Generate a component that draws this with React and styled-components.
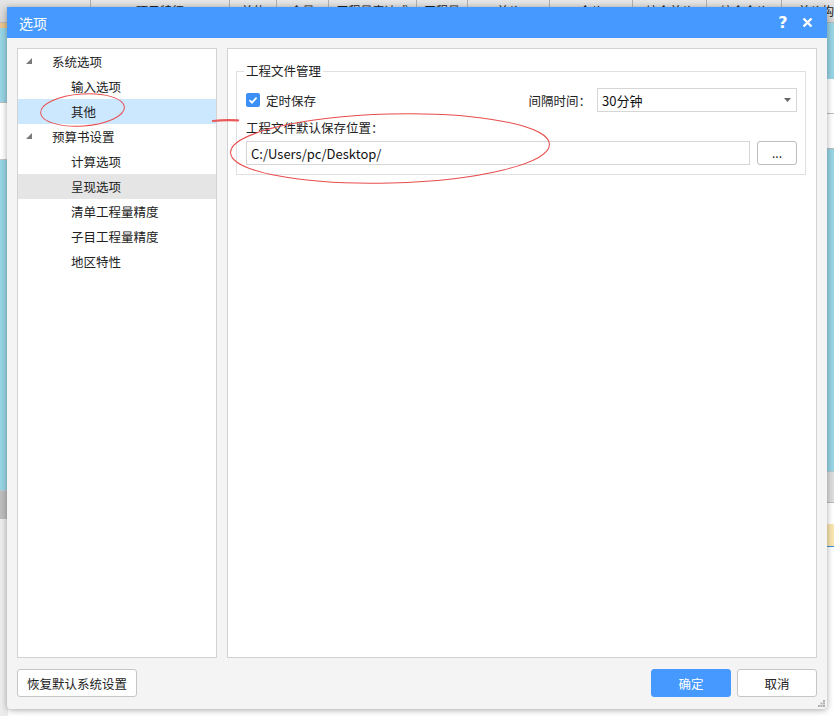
import styled, { createGlobalStyle } from "styled-components"

const GlobalStyle = createGlobalStyle`
    html, body {
        margin: 0;
        padding: 0;
        overflow: hidden;
    }
    body {
        font-family: "Noto Sans CJK SC", "Noto Sans", sans-serif;
        font-size: 12px;
        color: #333;
    }
`

const Screen = styled.div`
    position: relative;
    width: 834px;
    height: 716px;
    overflow: hidden;
    background: #fff;
`

/* ---- the app that sits behind the dialog ---- */

const BgApp = styled.div`
    display: flex;
    flex-direction: column;
    width: 100%;
    height: 100%;
`

const HeaderRow = styled.div`
    display: flex;
    height: 22px;
    background: linear-gradient(#e6e6e6, #d4d4d4);
    border-bottom: 1px solid #b8b8b8;
`

const HeaderCell = styled.div`
    width: ${p => p.w}px;
    flex-shrink: 0;
    border-right: 1px solid #b0b0b0;
    text-align: center;
    line-height: 22px;
    font-size: 12px;
    color: #222;
    white-space: nowrap;
    overflow: hidden;
`

const BgBody = styled.div`
    flex: 1;
    display: flex;
`

const Strip = styled.div`
    width: 8px;
    display: flex;
    flex-direction: column;
`

const Band = styled.div`
    height: ${p => p.h}px;
    flex: ${p => (p.fill ? 1 : "none")};
    background: ${p => p.bg};
    border-bottom: 1px solid ${p => p.line || "transparent"};
    font-size: 12px;
    line-height: ${p => p.h}px;
    color: #222;
    overflow: hidden;
    white-space: nowrap;
`

const BgMiddle = styled.div`
    flex: 1;
    background: #fff;
`

/* ---- dialog ---- */

const Dialog = styled.div`
    position: absolute;
    left: 7px;
    top: 7px;
    width: 820px;
    height: 702px;
    display: flex;
    flex-direction: column;
    background: #f4f4f4;
    border-radius: 0 0 4px 4px;
    box-shadow: 0 1px 6px rgba(0, 0, 0, 0.35);
`

const TitleBar = styled.div`
    height: 31px;
    display: flex;
    align-items: center;
    padding: 0 9px 0 12px;
    background: #4599ff;
    color: #fff;
`

const Title = styled.div`
    flex: 1;
    font-size: 14px;
`

const TitleButton = styled.div`
    width: 22px;
    height: 20px;
    display: flex;
    align-items: center;
    justify-content: center;
    margin-left: 2px;
    font-size: 16px;
    font-weight: bold;
    font-family: "DejaVu Sans", sans-serif;
`

const Body = styled.div`
    flex: 1;
    display: flex;
    gap: 10px;
    padding: 10px 10px 0 10px;
    min-height: 0;
`

const TreePanel = styled.div`
    width: 200px;
    box-sizing: border-box;
    background: #fff;
    border: 1px solid #d2d2d2;
`

const TreeRow = styled.div`
    height: 25px;
    display: flex;
    align-items: center;
    padding-left: ${p => (p.level ? 53 : 7)}px;
    padding-bottom: 1px;
    box-sizing: border-box;
    background: ${p => (p.selected ? "#cce8ff" : p.hover ? "#e5e5e5" : "transparent")};
    color: #222;
    font-size: 12.5px;
`

const Expander = styled.span`
    width: 8px;
    height: 8px;
    display: flex;
    margin-right: 19px;
`

const ContentPanel = styled.div`
    flex: 1;
    box-sizing: border-box;
    background: #fff;
    border: 1px solid #d2d2d2;
    padding: 14px 10px 0 8px;
`

const GroupBox = styled.fieldset`
    margin: 0;
    padding: 0 8px 9px 9px;
    border: 1px solid #e0e0e0;
`

const Legend = styled.legend`
    padding: 0 2px;
    margin-left: -2px;
    font-size: 12.5px;
    line-height: 16px;
    color: #222;
`

const Row = styled.div`
    display: flex;
    align-items: center;
    height: 24px;
    margin-top: ${p => p.mt || 0}px;
`

const CheckBox = styled.span`
    width: 14px;
    height: 14px;
    border-radius: 2px;
    background: #3b8ff5;
    display: flex;
    align-items: center;
    justify-content: center;
    margin-right: 6px;
`

const Label = styled.span`
    flex: ${p => (p.grow ? 1 : "none")};
    font-size: 12.5px;
    color: #222;
    margin-right: ${p => p.mr || 0}px;
`

const Select = styled.div`
    width: 200px;
    height: 24px;
    box-sizing: border-box;
    border: 1px solid #d6d6d6;
    display: flex;
    align-items: center;
    padding: 0 5px 0 4px;
    font-size: 13px;
    color: #111;
`

const SelectText = styled.span`
    flex: 1;
`

const PathInput = styled.div`
    flex: 1;
    height: 24px;
    box-sizing: border-box;
    border: 1px solid #d6d6d6;
    display: flex;
    align-items: center;
    padding: 0 4px;
    font-size: 13px;
    color: #111;
`

const BrowseButton = styled.div`
    width: 40px;
    height: 24px;
    box-sizing: border-box;
    margin-left: 7px;
    border: 1px solid #bdbdbd;
    border-radius: 3px;
    background: #fff;
    display: flex;
    align-items: center;
    justify-content: center;
    font-size: 12px;
    color: #222;
    padding-bottom: 2px;
`

const Footer = styled.div`
    height: 51px;
    box-sizing: border-box;
    display: flex;
    align-items: flex-start;
    gap: 6px;
    padding: 11px 10px 0 10px;
    position: relative;
`

const Button = styled.div`
    width: ${p => p.w}px;
    height: 28px;
    box-sizing: border-box;
    display: flex;
    align-items: center;
    justify-content: center;
    border-radius: 3px;
    font-size: 12.5px;
    background: ${p => (p.primary ? "#4599ff" : "#fff")};
    color: ${p => (p.primary ? "#fff" : "#222")};
    border: 1px solid ${p => (p.primary ? "#4599ff" : "#c6c6c6")};
`

const Spacer = styled.div`
    flex: 1;
`

const Grip = styled.svg`
    position: absolute;
    right: 2px;
    bottom: 2px;
`

const Annotations = styled.svg`
    position: absolute;
    left: 0;
    top: 0;
    pointer-events: none;
`

const headers = [
    ["", 90], ["项目特征", 138], ["单位", 46], ["含量", 51], ["工程量表达式", 87],
    ["工程量", 50], ["单价", 81], ["合价", 82], ["综合单价", 73], ["综合合价", 74], ["单价构成", 80],
]

const tree = [
    { text: "系统选项", level: 0 },
    { text: "输入选项", level: 1 },
    { text: "其他", level: 1, selected: true },
    { text: "预算书设置", level: 0 },
    { text: "计算选项", level: 1 },
    { text: "呈现选项", level: 1, hover: true },
    { text: "清单工程量精度", level: 1 },
    { text: "子目工程量精度", level: 1 },
    { text: "地区特性", level: 1 },
]

const ExpandedIcon = () => (
    <svg width="8" height="8" viewBox="0 0 8 8">
        <polygon points="7,1 7,7 1,7" fill="#7a7a7a" />
    </svg>
)

const App = () => {
    return (
        <Screen>
            <GlobalStyle />
            <BgApp>
                <HeaderRow>
                    {headers.map(([t, w], i) => (
                        <HeaderCell key={i} w={w}>{t}</HeaderCell>
                    ))}
                </HeaderRow>
                <BgBody>
                    <Strip>
                        <Band h={4} bg="#e9c48e" />
                        <Band h={74} bg="#97d4e4" line="#bcbcbc" />
                        <Band h={56} bg="#fff" line="#c8c8c8" />
                        <Band h={330} bg="#97d4e4" line="#b9c9cc" />
                        <Band h={27} bg="#bdbdbd" />
                        <Band fill bg="#ececec" />
                    </Strip>
                    <BgMiddle />
                    <Strip>
                        <Band h={55} bg="#97d4e4" />
                        <Band h={34} bg="#fff" line="#bbb" />
                        <Band h={34} bg="#fff" line="#bbb" />
                        <Band h={322} bg="#97d4e4" line="#b9c9cc" />
                        <Band h={30} bg="#dcdcdc" line="#bbb" />
                        <Band h={20} bg="#fff" />
                        <Band h={22} bg="#f9e6b0" line="#3a8fd8" />
                        <Band fill bg="#fff" />
                    </Strip>
                </BgBody>
            </BgApp>

            <Dialog>
                <TitleBar>
                    <Title>选项</Title>
                    <TitleButton>?</TitleButton>
                    <TitleButton>
                        <svg width="11" height="11" viewBox="0 0 11 11">
                            <path d="M1.5 1.5 L9.5 9.5 M9.5 1.5 L1.5 9.5" stroke="#fff" strokeWidth="2.4" />
                        </svg>
                    </TitleButton>
                </TitleBar>

                <Body>
                    <TreePanel>
                        {tree.map((item, i) => (
                            <TreeRow key={i} level={item.level} selected={item.selected} hover={item.hover}>
                                {item.level === 0 && <Expander><ExpandedIcon /></Expander>}
                                {item.text}
                            </TreeRow>
                        ))}
                    </TreePanel>

                    <ContentPanel>
                        <GroupBox>
                            <Legend>工程文件管理</Legend>
                            <Row mt={9}>
                                <CheckBox>
                                    <svg width="10" height="10" viewBox="0 0 10 10">
                                        <path d="M1.5 5.2 L4 7.6 L8.6 2.6" stroke="#fff" strokeWidth="1.8" fill="none" />
                                    </svg>
                                </CheckBox>
                                <Label grow>定时保存</Label>
                                <Label mr={6}>间隔时间：</Label>
                                <Select>
                                    <SelectText>30分钟</SelectText>
                                    <svg width="7" height="4" viewBox="0 0 7 4">
                                        <polygon points="0,0 7,0 3.5,4" fill="#666" />
                                    </svg>
                                </Select>
                            </Row>
                            <Row mt={3}>
                                <Label>工程文件默认保存位置：</Label>
                            </Row>
                            <Row mt={2}>
                                <PathInput>C:/Users/pc/Desktop/</PathInput>
                                <BrowseButton>...</BrowseButton>
                            </Row>
                        </GroupBox>
                    </ContentPanel>
                </Body>

                <Footer>
                    <Button w={120}>恢复默认系统设置</Button>
                    <Spacer />
                    <Button w={80} primary>确定</Button>
                    <Button w={80}>取消</Button>
                    <Grip width="7" height="7" viewBox="0 0 7 7">
                        <rect x="5" y="0" width="2" height="2" fill="#b0b0b0" />
                        <rect x="2.5" y="2.5" width="2" height="2" fill="#b0b0b0" />
                        <rect x="5" y="2.5" width="2" height="2" fill="#b0b0b0" />
                        <rect x="0" y="5" width="2" height="2" fill="#b0b0b0" />
                        <rect x="2.5" y="5" width="2" height="2" fill="#b0b0b0" />
                        <rect x="5" y="5" width="2" height="2" fill="#b0b0b0" />
                    </Grip>
                </Footer>
            </Dialog>

            <Annotations width="834" height="716" viewBox="0 0 834 716">
                <ellipse cx="82.5" cy="110" rx="42" ry="16" fill="none" stroke="#e84c4c" strokeWidth="1" transform="rotate(-4 82.5 110)" />
                <ellipse cx="390" cy="148.5" rx="159.5" ry="34.5" fill="none" stroke="#e84c4c" strokeWidth="1" transform="rotate(-1.5 390 148.5)" />
                <path d="M213 121 Q225 119.6 238 120.4" stroke="#e85a5a" strokeWidth="2.2" fill="none" strokeLinecap="round" />
            </Annotations>
        </Screen>
    )
}

export default App
